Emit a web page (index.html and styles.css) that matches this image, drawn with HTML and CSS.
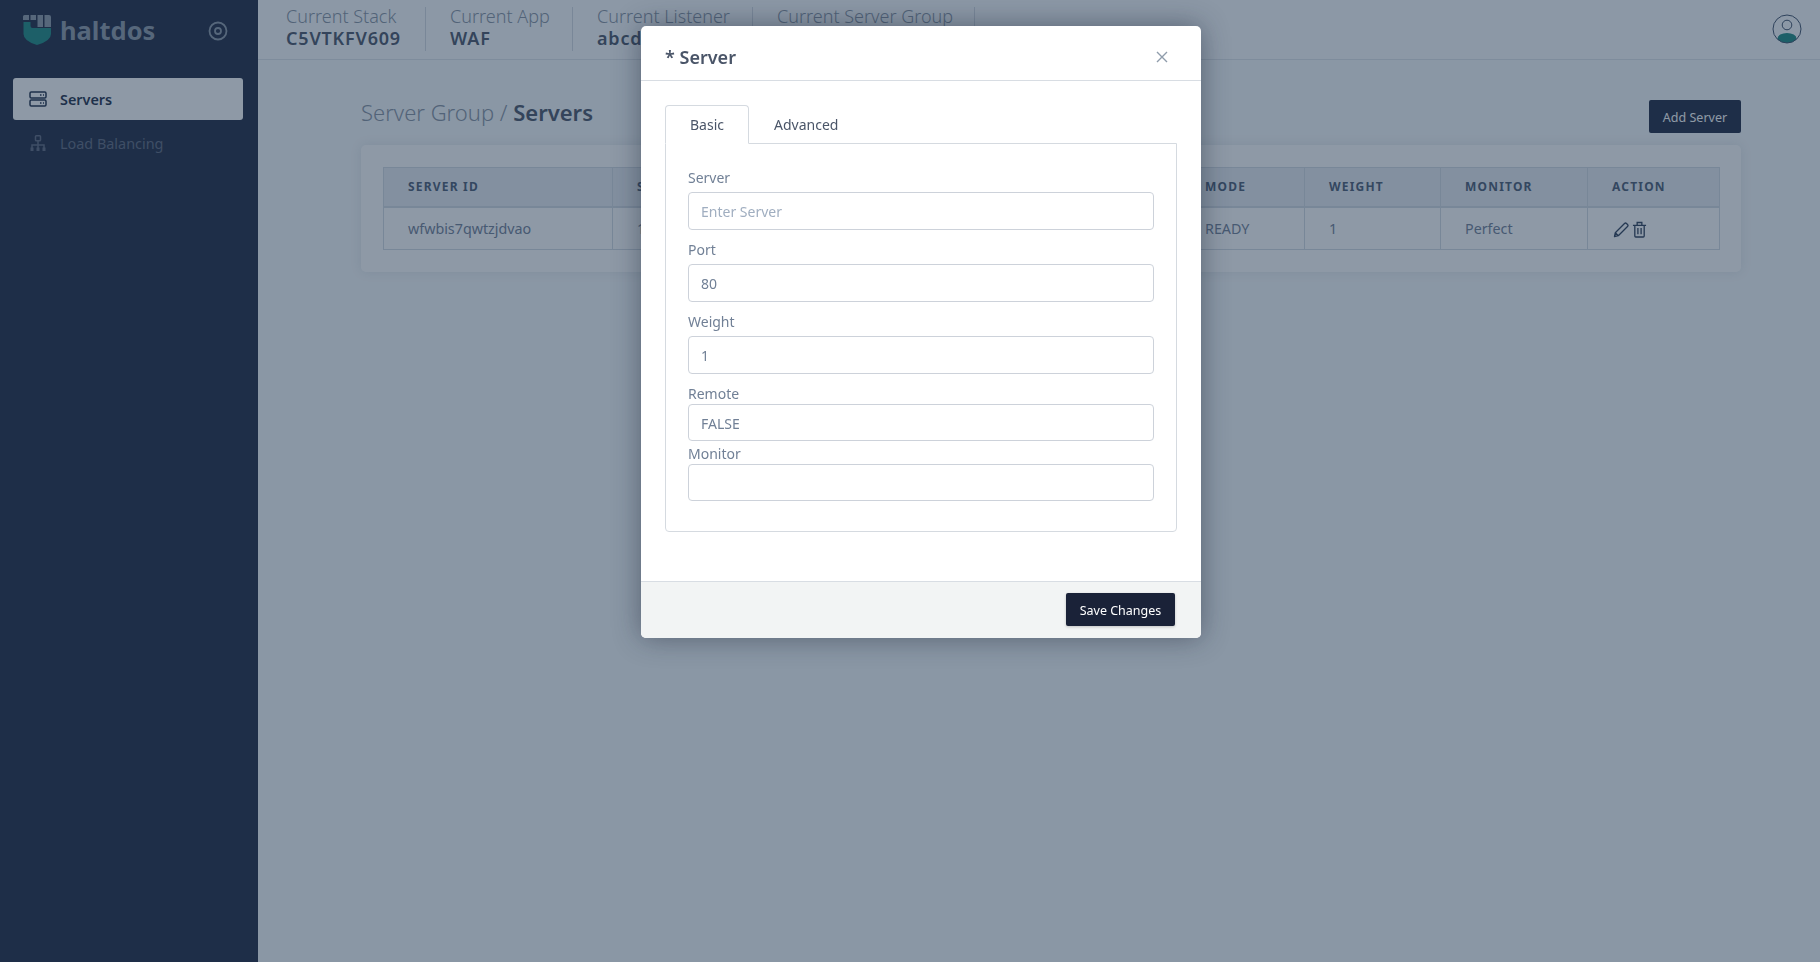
FILE: index.html
```html
<!DOCTYPE html>
<html lang="en">
<head>
<meta charset="utf-8">
<title>Servers</title>
<link rel="stylesheet" href="styles.css">
</head>
<body>
<div class="app">
  <aside class="sidebar">
    <div class="brand">
      <svg class="logo" viewBox="0 0 28 30" width="28" height="30">
        <path d="M0 1.5Q0 0 1.5 0H6V5H0ZM7.5 0H13V5H7.5ZM14.500 0H20V12H14.500ZM21.500 0H26Q28 0 28 2V12H21.500Z" fill="#8e9aa8"/>
        <path d="M.5 7H7.500V11Q7.500 13 9.500 13H28V19Q28 26 14 30Q.5 26 .5 19Z" fill="#1c8a83"/>
      </svg>
      <span class="brand-name">haltdos</span>
      <svg class="target" viewBox="0 0 20 20" width="20" height="20">
        <circle cx="10" cy="10" r="8.500" fill="none" stroke="#8e9aa8" stroke-width="1.800"/>
        <circle cx="10" cy="10" r="3" fill="none" stroke="#8e9aa8" stroke-width="1.800"/>
      </svg>
    </div>
    <nav class="menu">
      <a class="menu-item active">
        <svg class="menu-icon" viewBox="0 0 18 16" width="18" height="16">
          <rect x="1" y="1" width="16" height="6" rx="1.200" fill="none" stroke="currentColor" stroke-width="1.500"/>
          <rect x="1" y="9" width="16" height="6" rx="1.200" fill="none" stroke="currentColor" stroke-width="1.500"/>
          <path d="M11 4h1.500M14 4h1M11 12h1.500M14 12h1" stroke="currentColor" stroke-width="1.300"/>
        </svg>
        <span>Servers</span>
      </a>
      <a class="menu-item muted">
        <svg class="menu-icon" viewBox="0 0 18 16" width="18" height="16">
          <rect x="6.500" y=".8" width="5" height="5" rx=".8" fill="none" stroke="currentColor" stroke-width="1.500"/>
          <path d="M9 6v4M3 13v-3h12v3M9 10v3" fill="none" stroke="currentColor" stroke-width="1.500"/>
          <path d="M1.500 12.500h3V16h-3ZM7.500 12.500h3V16h-3ZM13.500 12.500h3V16h-3Z" fill="currentColor"/>
        </svg>
        <span>Load Balancing</span>
      </a>
    </nav>
  </aside>
  <main class="main">
    <header class="topbar">
      <div class="crumb c1"><span class="crumb-label">Current Stack</span><strong class="crumb-value">C5VTKFV609</strong></div>
      <div class="crumb c2"><span class="crumb-label">Current App</span><strong class="crumb-value">WAF</strong></div>
      <div class="crumb c3"><span class="crumb-label">Current Listener</span><strong class="crumb-value">abcd</strong></div>
      <div class="crumb c4"><span class="crumb-label">Current Server Group</span><strong class="crumb-value">&nbsp;</strong></div>
      <svg class="avatar" viewBox="0 0 30 30" width="30" height="30">
        <defs><clipPath id="avatarClip"><circle cx="15" cy="15" r="14"/></clipPath></defs>
        <ellipse cx="15" cy="24.500" rx="9.500" ry="5.500" fill="#1c8a83" clip-path="url(#avatarClip)"/>
        <circle cx="15" cy="15" r="14" fill="none" stroke="#3d4f68" stroke-width="1"/>
        <circle cx="15" cy="11" r="4.800" fill="none" stroke="#3d4f68" stroke-width="1"/>
      </svg>
    </header>
    <section class="content">
      <div class="title-row">
        <h1 class="page-title"><span class="title-light">Server Group / </span><span class="title-strong">Servers</span></h1>
        <button class="btn btn-add">Add Server</button>
      </div>
      <div class="card">
        <table class="grid">
          <thead>
            <tr>
              <th class="w1">Server ID</th><th class="w2">Server</th><th class="w3">Port</th>
              <th class="w4">Mode</th><th class="w5">Weight</th><th class="w6">Monitor</th><th class="w7">Action</th>
            </tr>
          </thead>
          <tbody>
            <tr>
              <td>wfwbis7qwtzjdvao</td><td>10.0.0.11</td><td>80</td>
              <td>READY</td><td>1</td><td>Perfect</td>
              <td class="actions">
                <svg class="edit" viewBox="0 0 16 16" width="16" height="16"><path d="M1.500 14.500l.8-3.800L11.500 1.500q1-1 2 0l1 1q1 1 0 2l-9.200 9.200ZM2.300 10.700l3 3" fill="none" stroke="#2d3e58" stroke-width="1.300" stroke-linejoin="round"/></svg>
                <svg class="trash" viewBox="0 0 16 18" width="15" height="17"><path d="M1 4.500h14M5.500 4.500V1.500h5v3M3 4.500V16q0 1 1 1h8q1 0 1-1V4.500M6.300 7.500v6.500M9.700 7.500v6.500" fill="none" stroke="#2d3e58" stroke-width="1.400"/></svg>
              </td>
            </tr>
          </tbody>
        </table>
      </div>
    </section>
  </main>
</div>
<div class="backdrop"></div>
<div class="modal">
  <div class="modal-head">
    <h2 class="modal-title">* Server</h2>
    <svg class="close" viewBox="0 0 12 12" width="12" height="12"><path d="M1 1l10 10M11 1L1 11" stroke="#8f9cab" stroke-width="1.400" fill="none"/></svg>
  </div>
  <div class="modal-body">
    <div class="tabs">
      <a class="tab active">Basic</a>
      <a class="tab">Advanced</a>
    </div>
    <div class="tab-pane">
      <div class="field"><label class="lbl">Server</label><input class="inp" placeholder="Enter Server"></div>
      <div class="field"><label class="lbl">Port</label><input class="inp" value="80"></div>
      <div class="field"><label class="lbl">Weight</label><input class="inp" value="1"></div>
      <div class="field tight"><label class="lbl">Remote</label><input class="inp short" value="FALSE"></div>
      <div class="field tight last"><label class="lbl">Monitor</label><input class="inp short"></div>
    </div>
  </div>
  <div class="modal-foot"><button class="btn btn-save">Save Changes</button></div>
</div>
</body>
</html>
```
FILE: styles.css
```css
* { box-sizing: border-box; }
html, body { margin: 0; height: 100%; }
body { font-family: "Noto Sans", "Liberation Sans", sans-serif; font-size: 14px; color: #4a5568; background: #f7fafc; overflow: hidden; }
.app { display: flex; height: 962px; }

.sidebar { width: 258px; flex: none; background: #1e2842; }
.brand { display: flex; align-items: center; height: 60px; padding: 0 30px 0 23px; }
.logo { flex: none; }
.brand-name { margin: 2px 0 0 9px; font-size: 25.500px; font-weight: 700; color: #8e9aa8; line-height: 1; }
.target { margin-left: auto; margin-top: 2px; }
.menu { padding: 18px 15px 0 13px; display: flex; flex-direction: column; gap: 2px; }
.menu-item { display: flex; align-items: center; height: 42px; padding-left: 16px; border-radius: 3px; font-size: 14.400px; }
.menu-item.active { background: #fff; color: #1e2e48; font-weight: 600; }
.menu-item.muted { color: #60687e; }
.menu-icon { flex: none; margin-right: 13px; }

.main { flex: 1; min-width: 0; }
.topbar { display: flex; align-items: center; height: 60px; padding-left: 4px; padding-right: 18px; border-bottom: 1px solid #dfe4ea; background: #fbfdff; }
.crumb { display: flex; flex-direction: column; justify-content: center; height: 44px; margin-top: -1px; padding: 0 24px 4px; border-right: 1px solid #d5dbe3; }
.c1 { width: 164px; } .c2 { width: 147px; } .c3 { width: 180px; } .c4 { width: 222px; }
.crumb-label { font-size: 18px; font-weight: 300; line-height: 22px; color: #8793a3; white-space: nowrap; }
.crumb-value { font-size: 18px; font-weight: 600; line-height: 22px; letter-spacing: .8px; color: #4a5568; white-space: nowrap; }
.avatar { margin-left: auto; margin-top: -2px; }

.content { padding: 40px 79px 0 103px; }
.title-row { display: flex; justify-content: space-between; align-items: flex-start; margin-bottom: 12px; }
.page-title { margin: 0; font-size: 22px; font-weight: 400; line-height: 24px; }
.title-light { font-weight: 300; color: #8793a3; }
.title-strong { font-weight: 600; color: #4a5568; }
.btn { border: 0; border-radius: 2px; font: inherit; font-size: 12.500px; cursor: pointer; }
.btn-add { width: 92px; height: 33px; padding-top: 3px; background: #1e2842; color: #fff; }

.card { background: #fff; border-radius: 5px; padding: 22px 23px 22px 22px; box-shadow: 0 0 12px rgba(30, 46, 72, .1); }
.grid { width: 100%; table-layout: fixed; border-collapse: collapse; }
.grid th, .grid td { border: 1px solid #d3dae2; padding: 0 0 0 24px; text-align: left; }
.grid th { height: 39px; border-bottom-width: 2px; background: #e9edf2; font-size: 12px; font-weight: 700; letter-spacing: 1.200px; text-transform: uppercase; color: #4a5a72; white-space: nowrap; }
.grid td { height: 43px; font-size: 14.300px; color: #718096; white-space: nowrap; }
.w1 { width: 229px; } .w2 { width: 284px; } .w3 { width: 284px; } .w4 { width: 124px; }
.w5 { width: 136px; } .w6 { width: 147px; } .w7 { width: 132px; }
.actions svg { vertical-align: middle; }
.actions .edit { margin-left: 1px; }
.actions .trash { margin-left: -1px; }

.backdrop { position: fixed; inset: 0; background: rgba(30, 52, 78, .5); }
.modal { position: fixed; left: 641px; top: 26px; width: 560px; background: #fff; border-radius: 5px; box-shadow: 0 0 28px rgba(20, 30, 50, .45); overflow: hidden; }
.modal-head { display: flex; justify-content: space-between; align-items: center; height: 55px; padding: 8px 27px 0 24px; border-bottom: 1px solid #d8dde3; }
.modal-title { margin: 0; font-size: 18px; font-weight: 600; color: #4a5568; }
.close { margin-right: 6px; }
.modal-body { height: 500px; padding: 24px 24px 0; }
.tabs { display: flex; height: 39px; margin-bottom: -1px; position: relative; }
.tab { display: flex; align-items: center; padding: 0 24px; font-size: 14px; color: #4a5568; border: 1px solid transparent; }
.tab.active { background: #fff; border-color: #d5dae0 #d5dae0 #fff; border-radius: 4px 4px 0 0; }
.tab-pane { height: 389px; padding: 24px 22px 0; border: 1px solid #d5dae0; border-radius: 0 0 4px 4px; }
.field { margin-bottom: 10px; }
.field.tight { margin-bottom: 0; }
.lbl { display: block; height: 24px; line-height: 19px; font-size: 14px; color: #718096; }
.field.tight .lbl { height: 20px; line-height: 20px; }
.field.last .lbl { height: 23px; line-height: 25px; }
.inp { display: block; width: 100%; height: 38px; padding: 0 12px; border: 1px solid #cdd2da; border-radius: 4px; font: inherit; font-size: 14px; color: #718096; background: #fff; outline: 0; }
.inp.short { height: 37px; padding-top: 2px; }
.inp::placeholder { color: #a0aec0; opacity: 1; }
.modal-foot { display: flex; justify-content: flex-end; align-items: flex-start; height: 57px; padding: 11px 26px 0 0; background: #f2f4f4; border-top: 1px solid #d8dde3; }
.btn-save { width: 109px; height: 33px; padding-top: 3px; background: #1a2238; color: #fff; box-shadow: 0 1px 3px rgba(0, 0, 0, .2); }
```
